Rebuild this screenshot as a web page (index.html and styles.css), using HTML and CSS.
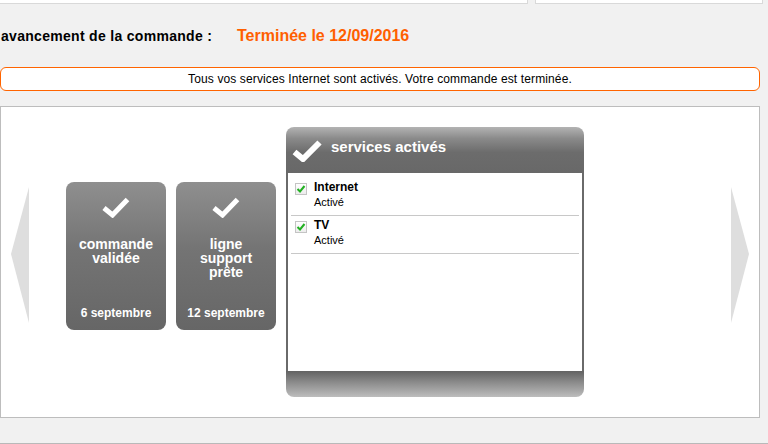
FILE: index.html
```html
<!DOCTYPE html>
<html lang="fr">
<head>
<meta charset="utf-8">
<title>Avancement de la commande</title>
<link rel="stylesheet" href="styles.css">
</head>
<body>
<div class="topbar">
  <div class="tb tb1"></div>
  <div class="tb tb2"></div>
</div>

<div class="status">
  <span class="status-label">avancement de la commande :</span>
  <span class="status-value">Terminée le 12/09/2016</span>
</div>

<div class="message">Tous vos services Internet sont activés. Votre commande est terminée.</div>

<div class="panel">
  <div class="track">
    <svg class="arrow arrow-left" width="18" height="136" viewBox="0 0 18 136"><polygon points="0,67 18,0 18,136" fill="#dedede"/></svg>

    <div class="step">
      <svg class="step-check" width="28" height="21" viewBox="0 0 28 21"><path d="M2 11 L10.5 18 L25.5 2.5" fill="none" stroke="#fff" stroke-width="5"/></svg>
      <div class="step-title">commande<br>validée</div>
      <div class="step-date">6 septembre</div>
    </div>

    <div class="step">
      <svg class="step-check" width="28" height="21" viewBox="0 0 28 21"><path d="M2 11 L10.5 18 L25.5 2.5" fill="none" stroke="#fff" stroke-width="5"/></svg>
      <div class="step-title">ligne<br>support<br>prête</div>
      <div class="step-date">12 septembre</div>
    </div>

    <div class="current">
      <div class="current-head">
        <svg class="head-check" width="30" height="22" viewBox="0 0 30 22"><path d="M2.5 12 L11 19 L27.5 2.5" fill="none" stroke="#fff" stroke-width="6"/></svg>
        <span class="head-title">services activés</span>
      </div>
      <div class="current-body">
        <div class="item">
          <span class="cb"><svg width="10" height="10" viewBox="0 0 10 10"><path d="M1.5 5 L4 7.5 L8.5 2" fill="none" stroke="#22b022" stroke-width="2"/></svg></span>
          <div class="item-text">
            <div class="item-name">Internet</div>
            <div class="item-state">Activé</div>
          </div>
        </div>
        <div class="item">
          <span class="cb"><svg width="10" height="10" viewBox="0 0 10 10"><path d="M1.5 5 L4 7.5 L8.5 2" fill="none" stroke="#22b022" stroke-width="2"/></svg></span>
          <div class="item-text">
            <div class="item-name">TV</div>
            <div class="item-state">Activé</div>
          </div>
        </div>
      </div>
      <div class="current-foot"></div>
    </div>

    <svg class="arrow arrow-right" width="18" height="136" viewBox="0 0 18 136"><polygon points="18,67 0,0 0,136" fill="#dedede"/></svg>
  </div>
</div>

<div class="next"></div>
</body>
</html>
```

FILE: styles.css
```css
html, body {
  margin: 0;
  padding: 0;
}
body {
  background: #f1f1f1;
  font-family: "Liberation Sans", Arial, sans-serif;
  color: #000;
  width: 768px;
  height: 444px;
  overflow: hidden;
}

.topbar {
  display: flex;
  gap: 7px;
}
.tb {
  height: 3px;
  background: #fff;
  border: 1px solid #d9d9d9;
  border-top: 0;
}
.tb1 {
  width: 527px;
  border-left: 0;
}
.tb2 {
  width: 226px;
}

.status {
  display: flex;
  align-items: center;
  margin-top: 22px;
  height: 20px;
}
.status-label {
  width: 237px;
  font-size: 14px;
  font-weight: bold;
  letter-spacing: 0.3px;
  padding-left: 1px;
  box-sizing: border-box;
}
.status-value {
  font-size: 16px;
  font-weight: bold;
  color: #ff5f00;
}

.message {
  margin-top: 21px;
  width: 760px;
  box-sizing: border-box;
  border: 1px solid #ff6400;
  border-radius: 6px;
  background: #fff;
  text-align: center;
  font-size: 12px;
  letter-spacing: 0.12px;
  line-height: 22px;
}

.panel {
  margin-top: 15px;
  width: 760px;
  height: 312px;
  box-sizing: border-box;
  border: 1px solid #bdbdbd;
  background: #fff;
}
.track {
  display: flex;
  align-items: flex-start;
}
.arrow {
  display: block;
  margin-top: 80px;
}
.arrow-left {
  margin-left: 10px;
}
.arrow-right {
  margin-left: auto;
  margin-right: 10px;
}

.step {
  width: 100px;
  height: 148px;
  margin-top: 75px;
  margin-left: 10px;
  border-radius: 8px;
  background: linear-gradient(#8f8f8f 0%, #747474 45%, #666 100%);
  color: #fff;
  display: flex;
  flex-direction: column;
  align-items: center;
  text-align: center;
  font-weight: bold;
  box-sizing: border-box;
  padding: 15px 0 10px;
}
.step:first-of-type {
  margin-left: 37px;
}
.step-check {
  display: block;
}
.step-title {
  margin-top: 19px;
  font-size: 14px;
  line-height: 14px;
}
.step-date {
  margin-top: auto;
  font-size: 12px;
  line-height: 14px;
}

.current {
  width: 298px;
  height: 270px;
  margin-top: 20px;
  margin-left: 10px;
  display: flex;
  flex-direction: column;
}
.current-head {
  height: 46px;
  border-radius: 8px 8px 0 0;
  background: linear-gradient(#b3b3b3 0%, #8a8a8a 25%, #6c6c6c 55%, #686868 100%);
  display: flex;
  align-items: center;
  padding-left: 6px;
  color: #fff;
}
.head-check {
  display: block;
  margin-top: 2px;
}
.head-title {
  margin-left: 9px;
  font-size: 15px;
  font-weight: bold;
  margin-top: -7px;
}
.current-body {
  flex: 1;
  background: #fff;
  border-left: 2px solid #6a6a6a;
  border-right: 2px solid #6a6a6a;
  padding: 5px 3px 0;
}
.item {
  display: flex;
  align-items: flex-start;
  border-bottom: 1px solid #c8c8c8;
  padding: 2px 0 5px;
}
.cb {
  width: 12px;
  height: 12px;
  margin: 3px 0 0 4px;
  box-sizing: border-box;
  border: 1px solid #c4c4c4;
  background: linear-gradient(#fff, #ececec);
  display: flex;
  align-items: center;
  justify-content: center;
}
.item-text {
  margin-left: 7px;
}
.item-name {
  font-size: 12px;
  font-weight: bold;
  line-height: 15px;
}
.item-state {
  font-size: 11px;
  line-height: 15px;
}
.current-foot {
  height: 26px;
  border-radius: 0 0 8px 8px;
  background: linear-gradient(#626262 0%, #8c8c8c 45%, #bdbdbd 100%);
}

.next {
  margin-top: 25px;
  border-top: 1px solid #b9b9b9;
}
```
